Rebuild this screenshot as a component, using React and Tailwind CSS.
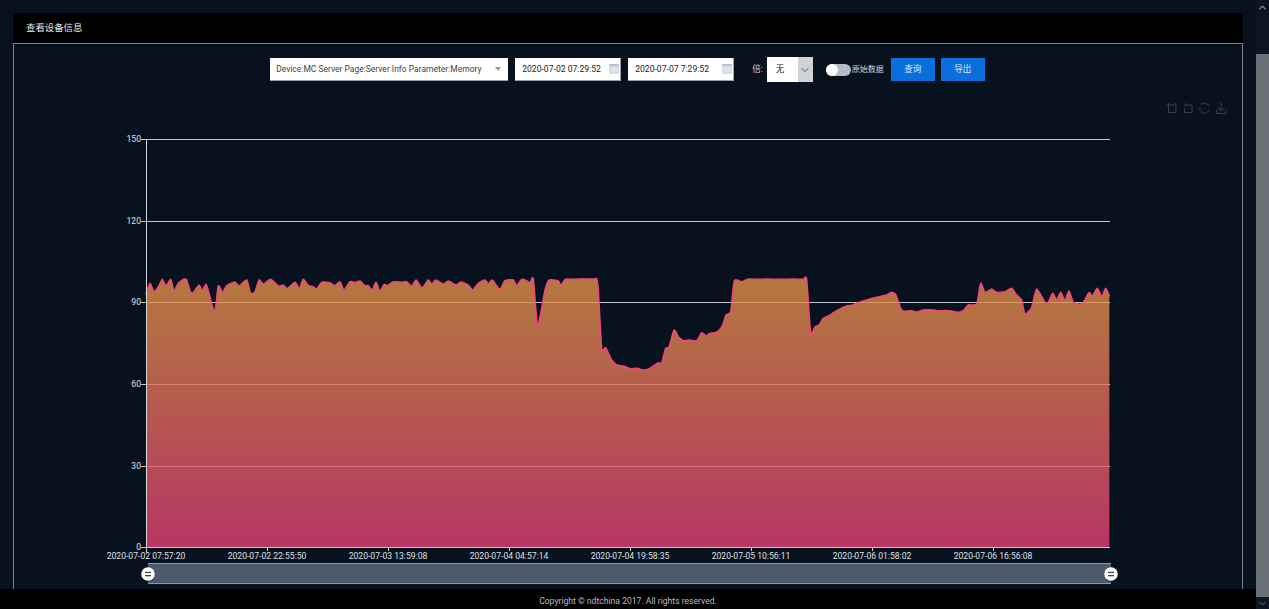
import React from "react";
import { ChevronDown, ChevronUp } from "lucide-react";

const seg1 = [[18,72],[30,40],[42,65],[55,50],[67,28],[78,48],[92,28],[102,62],[115,40],[130,28],[140,30],[152,67],[162,65],[177,45],[187,62],[198,43],[207,70],[224,125],[235,48],[248,68],[260,47],[285,36],[297,48],[320,30],[332,70],[345,65],[357,30],[370,42],[392,28],[415,48],[430,45],[442,55],[465,37],[478,55],[490,28],[505,47],[520,50],[530,57],[545,37],[570,38],[585,47],[600,35],[612,60],[630,35],[645,38],[660,33],[675,47],[685,47],[697,60],[708,37],[720,63],[732,43],[742,47],[760,35],[785,37],[800,35],[815,48],[828,30],[842,50],[850,50],[865,30]];
const seg2 = [[5,42],[18,30],[40,42],[55,33],[78,45],[92,36],[115,45],[128,60],[145,40],[165,30],[175,42],[187,30],[205,55],[213,55],[225,32],[250,30],[260,47],[275,28],[290,32],[300,38],[310,27],[322,165],[335,115],[345,60],[357,30],[385,33],[393,47],[405,28],[425,28],[450,27],[490,27],[500,27],[505,60],[515,235],[527,233],[545,270],[560,285],[580,288],[600,296],[620,295],[640,300],[660,295],[685,278],[695,280],[707,235],[717,232],[732,180],[745,200],[760,212],[775,210],[800,212],[815,188],[828,198],[840,190],[860,187]];
const seg3 = [[0,178],[8,165],[18,135],[32,125],[43,33],[65,35],[85,27],[110,28],[140,27],[180,28],[220,27],[250,28],[260,28],[272,188],[285,170],[297,165],[310,145],[325,138],[350,122],[380,108],[395,106],[420,96],[460,84],[500,75],[515,67],[528,75],[542,115],[552,124],[575,122],[590,126],[610,120],[640,120],[650,122],[690,122],[715,127],[730,122],[745,105],[770,102],[782,40],[795,67],[815,57],[830,67],[855,65],[875,55],[890,75],[905,90],[915,132],[935,112],[950,57],[975,97],[985,97],[998,70],[1010,90],[1022,67],[1035,92],[1047,62],[1060,97],[1080,103],[1090,97],[1107,68],[1117,78],[1132,55],[1145,80],[1157,55],[1168,78]];

const toPage = (seg, x0) => seg.map(([x, y]) => [x0 + x / 3, 270 + y / 3]);
const points = [...toPage(seg1, 140), ...toPage(seg2, 430), ...toPage(seg3, 720)];

// smooth the series a little, the chart draws it as a spline
const smooth = (pts) => {
  const t = 0.1;
  let d = `M${pts[0][0].toFixed(1)} ${pts[0][1].toFixed(1)}`;
  for (let i = 0; i < pts.length - 1; i++) {
    const p0 = pts[i - 1] || pts[i];
    const p1 = pts[i];
    const p2 = pts[i + 1];
    const p3 = pts[i + 2] || p2;
    const c1x = p1[0] + (p2[0] - p0[0]) * t;
    const c1y = p1[1] + (p2[1] - p0[1]) * t;
    const c2x = p2[0] - (p3[0] - p1[0]) * t;
    const c2y = p2[1] - (p3[1] - p1[1]) * t;
    d += `C${c1x.toFixed(1)} ${c1y.toFixed(1)} ${c2x.toFixed(1)} ${c2y.toFixed(1)} ${p2[0].toFixed(1)} ${p2[1].toFixed(1)}`;
  }
  return d;
};
const line = smooth(points);
const last = points[points.length - 1];
const area = `${line}L${last[0].toFixed(1)} 547L${points[0][0].toFixed(1)} 547Z`;

const yTicks = [
  [139, "150"],
  [221, "120"],
  [302, "90"],
  [384, "60"],
  [466, "30"],
  [547, "0"],
];
const xTicks = [
  [146, "2020-07-02 07:57:20"],
  [267, "2020-07-02 22:55:50"],
  [388, "2020-07-03 13:59:08"],
  [509, "2020-07-04 04:57:14"],
  [630, "2020-07-04 19:58:35"],
  [751, "2020-07-05 10:56:11"],
  [872, "2020-07-06 01:58:02"],
  [993, "2020-07-06 16:56:08"],
];

const CalendarIcon = () => (
  <svg width="10" height="10" viewBox="0 0 10 10" className="shrink-0">
    <rect x="0" y="0" width="10" height="10" fill="#d5dde7" />
    <rect x="0" y="0" width="10" height="2" fill="#b4c2d3" />
    <rect x="3" y="3.5" width="5" height="4.5" fill="#ece2da" />
  </svg>
);

const DateBox = ({ value }) => (
  <div className="w-[106px] h-[23px] bg-white border-b border-r border-[#9aa0a8] flex items-center justify-between pl-[7px] pr-[1px] text-[#222]">
    <span>{value}</span>
    <CalendarIcon />
  </div>
);

const Handle = ({ x }) => (
  <g>
    <circle cx={x} cy={575} r={7} fill="#000" opacity="0.25" />
    <circle cx={x} cy={574} r={6.8} fill="#fff" />
    <rect x={x - 3} y={571.8} width={6} height={1.3} fill="#444" />
    <rect x={x - 3} y={575} width={6} height={1.3} fill="#444" />
  </g>
);

const Chart = () => (
  <svg width="1228" height="496" viewBox="14 94 1228 496" className="block">
    <defs>
      <linearGradient id="areaFill" gradientUnits="userSpaceOnUse" x1="0" y1="280" x2="0" y2="547">
        <stop offset="0" stopColor="#e09146" />
        <stop offset="1" stopColor="#e34075" />
      </linearGradient>
    </defs>

    {/* toolbox */}
    <g fill="none" stroke="#38434f" strokeWidth="1">
      <path d="M1168.5 103v9.5h7.5v-7.5h-7.5M1166.5 105h2M1176 103v2" />
      <path d="M1185 105h7v7.5h-7.5v-4M1186.5 103l-2 2 2 2" />
      <path d="M1201 104.5a5 5 0 0 1 8 1.5M1209 110a5 5 0 0 1-8 2M1200.5 111a5 5 0 0 1-.5-4" />
      <path d="M1221 102.5v8M1217.5 107.5l3.5 3.5 3.5-3.5M1216.5 110v3.5h9.5v-3.5" />
    </g>

    {yTicks.map(([y]) => (
      <line key={y} x1="141" x2="1110" y1={y + 0.5} y2={y + 0.5} stroke="#c4c8cc" strokeWidth="1" />
    ))}

    <path d={area} fill="url(#areaFill)" fillOpacity="0.8" />
    <path d={line} fill="none" stroke="#f4457f" strokeWidth="1.5" strokeLinejoin="round" strokeLinecap="round" />

    <line x1="146.5" x2="146.5" y1="139" y2="552" stroke="#d8dbde" strokeWidth="1" />
    {xTicks.map(([x]) => (
      <line key={x} x1={x + 0.5} x2={x + 0.5} y1="547" y2="551" stroke="#c4c8cc" strokeWidth="1" />
    ))}

    <g fill="#dfe1e4" fontSize="8.6" fontFamily="Roboto, sans-serif">
      {yTicks.map(([y, label]) => (
        <text key={label} x="141" y={y + 3} textAnchor="end">{label}</text>
      ))}
      {xTicks.map(([x, label]) => (
        <text key={label} x={x} y="559" textAnchor="middle">{label}</text>
      ))}
    </g>

    {/* data zoom slider */}
    <rect x="148" y="563.5" width="963" height="20" fill="#4c5a6b" />
    <line x1="148" x2="1111" y1="563.5" y2="563.5" stroke="#8b96a3" />
    <line x1="148" x2="1111" y1="583.5" y2="583.5" stroke="#8b96a3" />
    <Handle x={148} />
    <Handle x={1111} />
  </svg>
);

const App = () => {
  return (
    <div className="h-[609px] flex overflow-hidden bg-[#08121f] font-['Roboto','Noto_Sans_CJK_SC',sans-serif] text-[8.6px]">
      <div className="flex-1 min-w-0 flex flex-col">
        <main className="flex-1 min-h-0 overflow-hidden pt-[13px] pl-[13px] pr-[13px]">
          <div className="h-[30px] bg-black flex items-center pl-[13px] text-[9.4px] text-[#e8e8e8]">
            查看设备信息
          </div>
          <section className="border border-[#7c8288] h-[600px]">
            <div className="flex justify-center items-center h-[23px] mt-[14px]">
              <div className="w-[238px] h-[23px] bg-white border-b border-[#9aa0a8] flex items-center justify-between pl-[6px] pr-[7px] text-[8.5px] text-[#444] mr-[7px] ml-[-1px]">
                <span>Device:MC Server Page:Server Info Parameter:Memory</span>
                <span className="border-x-[3px] border-t-[4px] border-x-transparent border-t-[#999]" />
              </div>
              <div className="mr-[7px]">
                <DateBox value="2020-07-02 07:29:52" />
              </div>
              <DateBox value="2020-07-07 7:29:52" />
              <span className="ml-[18px] mr-[4px] text-[#ccd2d8]">倍:</span>
              <div className="w-[46px] h-[25px] bg-white flex items-center justify-between pl-[9px] text-[#222]">
                <span>无</span>
                <span className="w-[15px] h-full bg-[#d0d2d4] flex items-center justify-center">
                  <ChevronDown size={12} color="#555" />
                </span>
              </div>
              <div className="ml-[13px] w-[25px] h-[12px] rounded-full bg-[#b4bbc8] flex items-center">
                <span className="w-[12px] h-[12px] rounded-full bg-white" />
              </div>
              <span className="ml-[1px] w-[33px] text-[8px] text-[#ccd2d8] whitespace-nowrap">原始数据</span>
              <button className="ml-[6px] w-[44px] h-[23px] bg-[#0a6fdc] text-[#dfe9f5] text-[8.6px]">查询</button>
              <button className="ml-[6px] w-[44px] h-[23px] bg-[#0a6fdc] text-[#dfe9f5] text-[8.6px]">导出</button>
            </div>
            <div className="mt-[13px]">
              <Chart />
            </div>
          </section>
        </main>
        <footer className="h-[20px] shrink-0 bg-black flex items-center justify-center pt-[4px] text-[#b8bcc0]">
          Copyright © ndtchina 2017. All rights reserved.
        </footer>
      </div>
      <div className="w-[13px] shrink-0 flex flex-col bg-[#0c1622]">
        <div className="h-[14px] flex items-center justify-center">
          <ChevronUp size={11} color="#8a8f96" strokeWidth={3} />
        </div>
        <div className="mt-[40px] flex-1 bg-[#6b6f76]" />
        <div className="h-[12px] flex items-center justify-center">
          <ChevronDown size={11} color="#6b6f76" strokeWidth={2} />
        </div>
      </div>
    </div>
  );
};

export default App;
